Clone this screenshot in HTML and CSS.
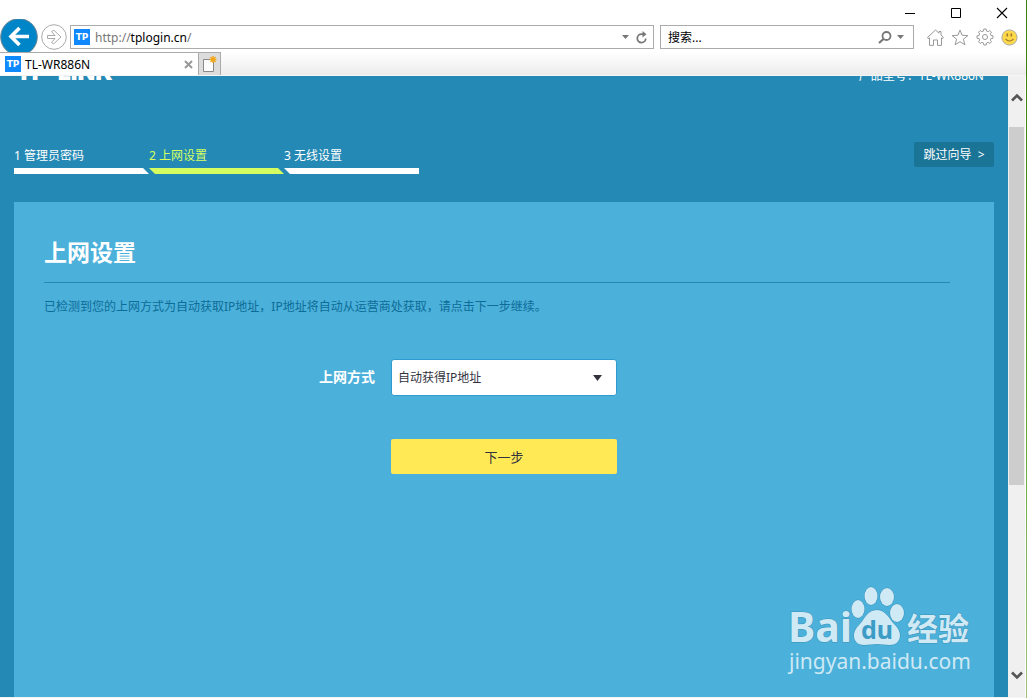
FILE: index.html
```html
<!DOCTYPE html>
<html lang="zh-CN">
<head>
<meta charset="utf-8">
<title>TL-WR886N</title>
<link rel="stylesheet" href="styles.css">
</head>
<body>
<div class="window">
  <header class="chrome">
    <div class="caption">
      <button class="cap-btn" aria-label="最小化"><svg width="12" height="12" viewBox="0 0 12 12"><path d="M1 6.500h10" stroke="#000"/></svg></button>
      <button class="cap-btn" aria-label="最大化"><svg width="12" height="12" viewBox="0 0 12 12"><path d="M1.500 1.500h9v9h-9z" fill="none" stroke="#000"/></svg></button>
      <button class="cap-btn" aria-label="关闭"><svg width="12" height="12" viewBox="0 0 12 12"><path d="M1 1l10 10M11 1L1 11" stroke="#000" stroke-width="1.100"/></svg></button>
    </div>
    <div class="toolbar">
      <button class="back" aria-label="后退"><svg width="38" height="38" viewBox="0 0 38 38"><circle cx="19" cy="19" r="18.300" fill="#0086c8" stroke="#6e8793"/><path d="M29 18.500H11M19.500 10L11 18.500l8.500 8.500" fill="none" stroke="#fff" stroke-width="3.600"/></svg></button>
      <button class="forward" aria-label="前进"><svg width="26" height="26" viewBox="0 0 26 26"><circle cx="13" cy="13" r="12.300" fill="#fff" stroke="#aaa"/><path d="M6.500 11.500h7.500l-3.500-4 2.300-1.300 7.200 6.800-7.200 6.800-2.300-1.300 3.500-4H6.500z" fill="none" stroke="#aaa"/></svg></button>
      <div class="field address">
        <span class="favicon">TP</span>
        <span class="url">http://<b>tplogin.cn</b>/</span>
        <svg class="drop" width="7" height="4" viewBox="0 0 7 4"><path d="M0 0h7L3.500 4z" fill="#777"/></svg>
        <button class="tool" aria-label="刷新"><svg width="12" height="13" viewBox="0 0 12 13"><path d="M7 3.200H5.500A4.200 4.200 0 1 0 9.700 7.500" fill="none" stroke="#777" stroke-width="1.800"/><path d="M6.500 0v6.400L10.500 3.200z" fill="#777"/></svg></button>
      </div>
      <div class="field search">
        <input class="search-input" type="text" aria-label="搜索" placeholder="搜索...">
        <button class="tool" aria-label="开始搜索"><svg width="14" height="13" viewBox="0 0 14 13"><circle cx="8.500" cy="5" r="4" fill="none" stroke="#777" stroke-width="1.800"/><path d="M5.500 8L1 12" stroke="#777" stroke-width="2.200"/></svg></button>
        <svg class="drop" width="7" height="4" viewBox="0 0 7 4"><path d="M0 0h7L3.500 4z" fill="#777"/></svg>
      </div>
      <nav class="icons">
        <button class="tool" aria-label="主页"><svg width="17" height="17" viewBox="0 0 17 17"><path d="M1 9.500L.6 8.300 8.500 1l3.500 3.200V2.500h2V6l2.400 2.300-.6 1.200-1.300-.6v7.500h-4V11h-4v5.400h-4V8.900z" fill="#fff" stroke="#999"/></svg></button>
        <button class="tool" aria-label="收藏夹"><svg width="18" height="17" viewBox="0 0 18 17"><path d="M9 1l2.100 5.300 5.800.3-4.500 3.600 1.500 5.600L9 12.700l-4.900 3.100 1.500-5.600L1.100 6.600l5.800-.3z" fill="#fff" stroke="#999"/></svg></button>
        <button class="tool" aria-label="工具"><svg width="18" height="18" viewBox="0 0 18 18"><path d="M7.500 3L7.800 1h2.400l.3 2 1.600.7 1.700-1.200 1.700 1.700-1.200 1.700.7 1.600 2 .3v2.400l-2 .3-.7 1.600 1.200 1.700-1.700 1.700-1.700-1.200-1.600.7-.3 2H7.800l-.3-2-1.600-.7-1.700 1.200-1.700-1.700 1.200-1.700-.7-1.600-2-.3V7.800l2-.3.700-1.600-1.200-1.700 1.700-1.700 1.700 1.200z" fill="#fff" stroke="#999"/><circle cx="9" cy="9" r="2.500" fill="none" stroke="#999"/></svg></button>
        <button class="tool" aria-label="反馈"><svg width="17" height="17" viewBox="0 0 17 17"><circle cx="8.500" cy="8.500" r="7.600" fill="#fdd94a" stroke="#aaa"/><path d="M6.300 4.500v3M10.300 4.500v3" stroke="#a07830" stroke-width="1.600"/><path d="M4.500 9.800q4 4.400 8 0" fill="none" stroke="#a07830" stroke-width="1.200"/></svg></button>
      </nav>
    </div>
    <div class="tabs">
      <div class="tab">
        <span class="favicon">TP</span>
        <span class="tab-name">TL-WR886N</span>
        <button class="tool" aria-label="关闭标签页"><svg width="9" height="9" viewBox="0 0 9 9"><path d="M1 1l7 7M8 1L1 8" stroke="#999" stroke-width="2"/></svg></button>
      </div>
      <button class="new-tab" aria-label="新建标签页"><svg width="16" height="16" viewBox="0 0 16 16"><path d="M1.500 3.500h10v12h-10z" fill="#fcfcfc" stroke="#888"/><path d="M11 0v7M7.500 3.500h7M8.500 1l5 5M13.500 1l-5 5" stroke="#f2a516" stroke-width="1.300"/></svg></button>
    </div>
  </header>

  <div class="viewport">
    <main class="page">
      <div class="masthead">
        <span class="logo">TP-LINK</span>
        <span class="model">产品型号：TL-WR886N</span>
      </div>
      <div class="wizard">
        <ol class="steps">
          <li class="step first">1 管理员密码</li>
          <li class="step active">2 上网设置</li>
          <li class="step last">3 无线设置</li>
        </ol>
        <button class="skip">跳过向导 &nbsp;&gt;</button>
      </div>
      <section class="panel">
        <div class="intro">
          <h1 class="title">上网设置</h1>
          <p class="hint">已检测到您的上网方式为自动获取IP地址，IP地址将自动从运营商处获取，请点击下一步继续。</p>
        </div>
        <form class="form">
          <label class="label" for="wan">上网方式</label>
          <select class="select" id="wan"><option>自动获得IP地址</option></select>
          <button class="next" type="button">下一步</button>
        </form>
      </section>
      <div class="watermark">
        <svg class="mark" width="184" height="60" viewBox="0 0 184 60">
          <g class="mark-text">
            <text x="-1" y="55" class="bai">Bai</text>
            <text x="118" y="53" class="exp">经验</text>
            <ellipse cx="69" cy="22" rx="6.500" ry="9"/>
            <ellipse cx="82" cy="9" rx="6.500" ry="9"/>
            <ellipse cx="98" cy="10" rx="7" ry="9"/>
            <ellipse cx="108" cy="26" rx="7" ry="9"/>
            <path d="M88 23c9 0 12 9 18 15 9 9 5 20-5 20-5 0-8-1-13-1s-8 1-13 1c-10 0-14-11-5-20 6-6 8-15 18-15z"/>
          </g>
          <text x="72" y="52" class="du">du</text>
        </svg>
        <span class="site">jingyan.baidu.com</span>
      </div>
    </main>
    <div class="scrollbar">
      <svg width="12" height="9" viewBox="0 0 12 9"><path d="M1 7.500l5-5 5 5" fill="none" stroke="#555" stroke-width="2.600"/></svg>
      <div class="track"><div class="thumb"></div></div>
      <svg width="12" height="9" viewBox="0 0 12 9"><path d="M1 1.500l5 5 5-5" fill="none" stroke="#555" stroke-width="2.600"/></svg>
    </div>
  </div>
</div>
</body>
</html>
```
FILE: styles.css
```css
* { box-sizing: border-box; }
body {
  margin: 0;
  height: 100vh;
  background: linear-gradient(#3a7d10, #4f9412 40%, #9fc47a);
  padding-right: 1px;
  font: 12px/16px "Noto Sans", "Noto Sans CJK SC", sans-serif;
  overflow: hidden;
}
button { border: 0; padding: 0; background: none; font: inherit; color: inherit; }
svg { display: block; }
.window { height: 100%; display: flex; flex-direction: column; background: #fff; }

.caption { height: 19px; display: flex; justify-content: flex-end; align-items: center; gap: 34px; padding: 7px 18px 0 0; }
.cap-btn { width: 12px; height: 12px; }

.toolbar { height: 33px; display: flex; align-items: center; padding: 3px 8px 0 0; overflow: hidden; }
.back { width: 38px; height: 38px; flex: none; }
.forward { margin: 0 3px; flex: none; }
.field { height: 24px; display: flex; align-items: center; border: 1px solid #ababab; background: #fff; }
.address { flex: 1; padding: 0 5px 0 3px; gap: 4px; }
.favicon { flex: none; width: 16px; height: 16px; background: #1089fe; color: #fff; font: bold 9px/16px "DejaVu Sans", sans-serif; text-align: center; }
.url { flex: 1; color: #777; padding: 1px 0 0 1px; }
.url b { color: #000; font-weight: 400; }
.address .drop { margin-right: 3px; }
.search { width: 254px; margin: 0 13px 0 6px; padding: 0 9px 0 7px; gap: 5px; }
.search-input { flex: 1; min-width: 0; border: 0; padding: 2px 0 0; font: inherit; outline: none; }
.search-input::placeholder { color: #000; opacity: 1; }
.icons { display: flex; align-items: center; gap: 7px; }

.tabs { height: 24px; display: flex; background: linear-gradient(#fff, #ececec); border-bottom: 1px solid #f5f5f5; }
.tab { width: 198px; display: flex; align-items: center; gap: 4px; background: #fff; border-top: 1px solid #ababab; padding: 0 5px; }
.tab-name { flex: 1; padding-top: 1px; }
.new-tab { width: 23px; background: #dcdcdc; border: 1px solid #ababab; border-bottom: 0; padding-left: 3px; }

.viewport { flex: 1; min-height: 0; display: flex; border-bottom: 1px solid #f4f4f4; }
.page { flex: 1; min-width: 0; position: relative; display: flex; flex-direction: column; padding: 0 14px; background: #2489b4; color: #fff; }
.masthead { height: 5px; display: flex; justify-content: space-between; align-items: flex-end; overflow: hidden; padding: 0 10px 0 2px; }
.logo { font: 900 23px/17px Inter, sans-serif; }
.model { line-height: 11px; }
.wizard { display: flex; justify-content: space-between; align-items: flex-start; margin: 61px 0 28px; }
.steps { list-style: none; display: flex; margin: 0; padding: 6px 0 0; }
.step { width: 135px; }
.step::after { content: ""; display: block; height: 6px; margin-top: 4px; background: #fff; }
.first::after { clip-path: polygon(0 0, 129px 0, 135px 100%, 0 100%); }
.active { color: #d5ff60; }
.active::after { background: #d5ff60; clip-path: polygon(0 0, 129px 0, 135px 100%, 6px 100%); }
.last::after { clip-path: polygon(0 0, 100% 0, 100% 100%, 6px 100%); }
.skip { width: 80px; height: 25px; border-radius: 2px; background: #1a7496; }

.panel { flex: 1; background: #4bb0da; }
.intro { padding: 35px 44px 0 30px; }
.title { margin: 0; padding-bottom: 15px; border-bottom: 1px solid #2489b4; font-size: 23px; line-height: 30px; font-weight: 700; }
.hint { margin: 16px 0 0; color: #0d6d98; }
.form { display: grid; grid-template-columns: 1fr 226px 1fr; column-gap: 16px; row-gap: 43px; align-items: center; padding-top: 44px; }
.label { text-align: right; font-size: 14px; font-weight: 700; padding-bottom: 2px; }
.select {
  appearance: none; height: 37px; border: 1px solid #2f9bd0; border-radius: 3px; padding: 0 6px;
  color: #333340; font: inherit;
  background: #fff url("data:image/svg+xml,%3Csvg xmlns='http://www.w3.org/2000/svg' width='9' height='6'%3E%3Cpath d='M0 0h9L4.500 6z' fill='%23333340'/%3E%3C/svg%3E") no-repeat right 14px center;
}
.next { grid-column: 2; height: 35px; border-radius: 2px; background: #ffe955; color: #333340; font-size: 13px; }

.watermark { position: absolute; right: 35px; bottom: 22px; color: #cfe9f5; width: 184px; }
.mark { overflow: visible; }
.mark-text { fill: #cfe9f5; stroke: #3b93b9; stroke-width: 1px; paint-order: stroke; }
.bai { font: 700 41px "Noto Sans", sans-serif; }
.exp { font: 700 31px "Noto Sans CJK SC", sans-serif; }
.du { font: 700 25px "Noto Sans", sans-serif; fill: #3d9cc6; }
.site { display: block; font-size: 21px; line-height: 28px; white-space: nowrap; }

.scrollbar { width: 18px; display: flex; flex-direction: column; align-items: center; background: #f0f0f0; padding: 17px 1px; border-right: 1px solid #fff; }
.scrollbar svg { flex: none; }
.track { flex: 1; width: 100%; padding: 25px 0; }
.thumb { height: 69%; background: #cdcdcd; }
```
